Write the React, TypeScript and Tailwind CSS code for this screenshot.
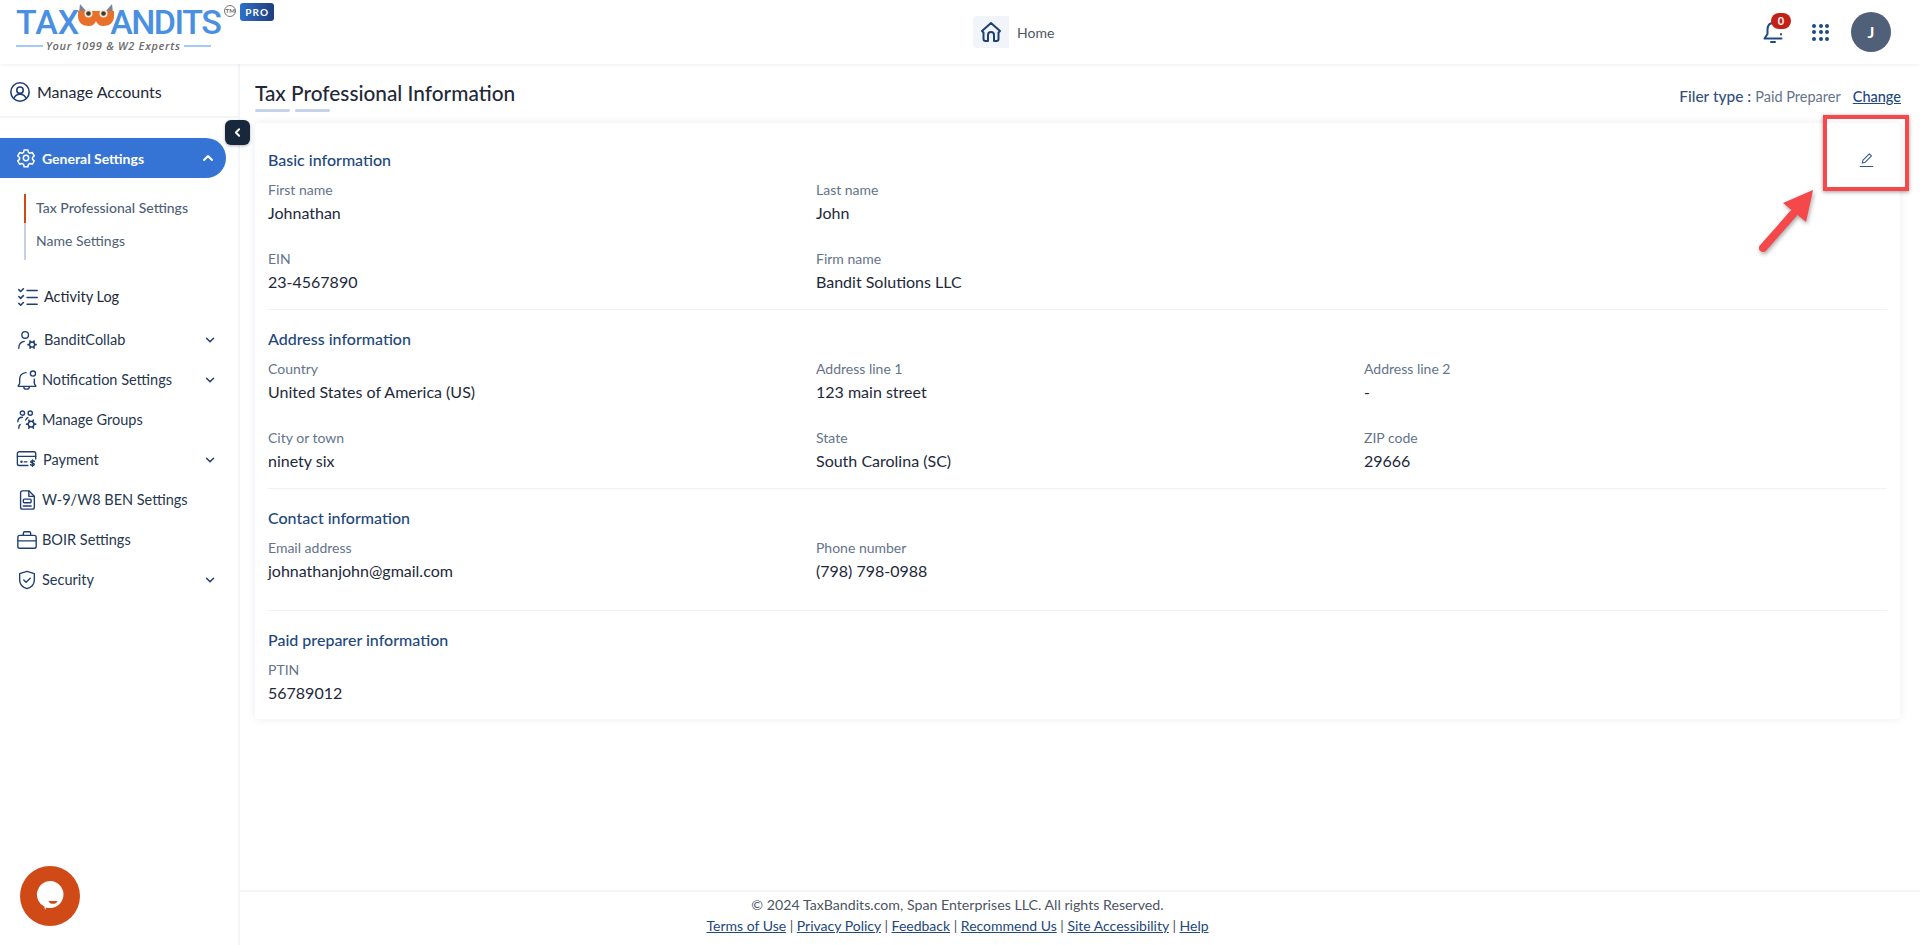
import { ChevronDown, ChevronLeft, ChevronUp } from 'lucide-react';
import type { ReactNode } from 'react';

const iconCls = 'w-[22px] h-[22px] shrink-0';

function Ic({ children }: { children: ReactNode }) {
  return (
    <svg viewBox="0 0 24 24" fill="none" stroke="#1f3f73" strokeWidth="1.5" strokeLinecap="round" strokeLinejoin="round" className={iconCls}>
      {children}
    </svg>
  );
}

function Gear({ cx, cy, r }: { cx: number; cy: number; r: number }) {
  return (
    <>
      <circle cx={cx} cy={cy} r={r * 0.62} />
      {[0, 60, 120, 180, 240, 300].map((a) => {
        const rad = (a * Math.PI) / 180;
        return (
          <path
            key={a}
            d={`M${cx + Math.cos(rad) * r * 0.65} ${cy + Math.sin(rad) * r * 0.65}L${cx + Math.cos(rad) * r} ${cy + Math.sin(rad) * r}`}
            strokeWidth="1.8"
          />
        );
      })}
    </>
  );
}

const menuItems = [
  {
    name: 'BanditCollab', gap: 'ml-[6px]', caret: true,
    icon: <><circle cx="10" cy="6.5" r="3.6" /><path d="M3 21c0-4 2.500-7 6-7.500" /><Gear cx={17.500} cy={17} r={4.500} /></>,
  },
  {
    name: 'Notification Settings', caret: true,
    icon: <><path d="M20 15c0 1.500.5 2.500 1.500 3v1h-19v-1c1-.5 1.500-1.500 1.500-3v-4c0-4 2.500-6.500 7-7" /><path d="M8.500 19.500a3 2.500 0 0 0 6 0" /><circle cx="18.500" cy="5" r="2.800" /><path d="M20 11v4" /></>,
  },
  {
    name: 'Manage Groups',
    icon: <><circle cx="7" cy="4.500" r="2.300" /><circle cx="15.500" cy="4.500" r="2.300" /><path d="M2 14c0-3 2-5 5-5M3 21c0-2 .5-3 1.500-4M13 9.500c-1 .5-2 1.500-2.500 2.500" /><Gear cx={16.500} cy={16.500} r={5} /></>,
  },
  {
    name: 'Payment', gap: 'ml-[5px]', caret: true,
    icon: <><path d="M13 18H3.500A2 2 0 0 1 1.500 16V5a2 2 0 0 1 2-2h16a2 2 0 0 1 2 2v6" /><path d="M1.500 8h20" /><circle cx="6" cy="14" r=".6" /><path d="M9 14h3M20 13.500c-.5-1-3.500-1-4 .3-.5 1.700 4.500 1.200 4 3.200-.4 1.300-3.600 1.300-4.200 0M18 12v7" /></>,
  },
  {
    name: 'W-9/W8 BEN Settings',
    icon: <><path d="M7 2h7l6 6v12a2 2 0 0 1-2 2H7a2 2 0 0 1-2-2V4a2 2 0 0 1 2-2z" /><path d="M14 2v6h6" /><rect x="8" y="11" width="8.500" height="4" rx="1" /><path d="M8 18.500h8.500" /></>,
  },
  {
    name: 'BOIR Settings',
    icon: <><rect x="2" y="7" width="20" height="14" rx="2" /><path d="M8 7V4.500A1.500 1.500 0 0 1 9.500 3h5A1.500 1.500 0 0 1 16 4.500V7M2 13h20" /></>,
  },
  {
    name: 'Security', caret: true,
    icon: <><path d="M12 2.500 20 5v7c0 5-3.500 8-8 9.500-4.500-1.500-8-4.500-8-9.500V5z" /><path d="m8.500 12 2.500 2.500 4.500-4.500" /></>,
  },
];

function Field({ label, value }: { label: string; value: string }) {
  return (
    <div>
      <p className="text-[14px] leading-[20px] text-[#64748b]">{label}</p>
      <p className="mt-[2px] text-[16px] leading-[22px] text-[#1e293b]">{value}</p>
    </div>
  );
}

function SectionTitle({ children }: { children: ReactNode }) {
  return <h3 className="text-[16px] leading-[22px] font-medium text-[#22477c]">{children}</h3>;
}

export default function App() {
  return (
    <div className="relative h-[945px] overflow-hidden bg-white font-['Lato','Inter',sans-serif]">
      {/* header */}
      <header className="relative z-10 h-[64px] bg-white flex items-center shadow-[0_1px_4px_rgba(30,60,110,0.08)]">
        <div className="w-[300px] pl-[16px] pt-[5px] self-start">
          <div className="flex items-start">
            <div>
              <div className="flex items-center h-[35px] font-['Roboto',sans-serif] text-[34px] leading-[35px] font-medium text-[#4a90e2]">
                <span>TAX</span>
                <svg viewBox="0 0 36 24" className="w-[36px] h-[24px] -mt-[13px] -mx-[1px] shrink-0">
                  <path d="M1 9 2 0l7 8zM35 9 34 0l-7 8z" fill="#7d8590" />
                  <path d="M0 7h36v5c0 7-5 10-11 10-3 0-6-2-7-5-1 3-4 5-7 5C5 22 0 19 0 12z" fill="#e8702a" />
                  <circle cx="10.500" cy="9.500" r="4" fill="#f5e9dc" />
                  <circle cx="25.500" cy="9.500" r="4" fill="#f5e9dc" />
                  <circle cx="10.500" cy="9.500" r="2.300" fill="#3b3b3b" />
                  <circle cx="25.500" cy="9.500" r="2.300" fill="#3b3b3b" />
                </svg>
                <span className="tracking-[-1.500px] -ml-[3px]">ANDITS</span>
              </div>
              <div className="flex items-center gap-[3px]">
                <span className="w-[27px] h-[2px] bg-[#a3c9f5]" />
                <span className="font-['Open_Sans',sans-serif] italic font-semibold text-[11px] leading-[12px] tracking-[0.7px] text-[#6b6b6b]">Your 1099 &amp; W2 Experts</span>
                <span className="w-[27px] h-[2px] bg-[#a3c9f5]" />
              </div>
            </div>
            <span className="ml-[4px] w-[12px] h-[12px] rounded-full border border-[#777] text-[6px] leading-[10px] text-center font-bold text-[#666]">TM</span>
            <span className="-mt-[2px] ml-[4px] w-[34px] h-[18px] rounded-[3px] bg-gradient-to-r from-[#2f6fc9] to-[#1e3f7d] text-white text-[10px] leading-[18px] font-bold tracking-[1.2px] text-center">PRO</span>
          </div>
        </div>
        <div className="ml-[673px] flex items-center">
          <div className="w-[36px] h-[32px] rounded-l-[4px] bg-[#f1f5fa] flex items-center justify-center">
            <svg viewBox="0 0 24 24" fill="none" strokeWidth="2" strokeLinejoin="round" strokeLinecap="round" className="w-[24px] h-[24px]" stroke="#1f3f73">
              <path d="M3 11 12 3l9 8-1.500 1.500V19a2 2 0 0 1-2 2H15v-6a3 3 0 0 0-6 0v6H6.500a2 2 0 0 1-2-2v-6.500z" />
            </svg>
          </div>
          <span className="ml-[8px] text-[14px] text-[#4b5563]">Home</span>
        </div>
        <div className="ml-auto flex items-center pr-[29px]">
          <div className="relative mr-[28px] w-[21px] h-[22px]">
            <svg viewBox="0 0 21 22" fill="none" stroke="#1f4a8a" strokeWidth="2" strokeLinecap="round" strokeLinejoin="round" className="w-[21px] h-[22px]">
              <path d="M10 2C6 2 4.500 5 4.500 9v4L1.500 17.500h17" />
              <path d="M8 21h4" />
              <path d="M18 13v.5" />
            </svg>
            <span className="absolute -top-[8px] left-[8px] w-[20px] h-[16px] rounded-full bg-[#c42116] text-white text-[11px] leading-[16px] font-bold text-center">0</span>
          </div>
          <div className="grid grid-cols-3 gap-[2.500px] mr-[22px]">
            {Array.from({ length: 9 }).map((_, i) => (
              <span key={i} className="w-[4px] h-[4px] rounded-full bg-[#1f4a8a]" />
            ))}
          </div>
          <div className="w-[40px] h-[40px] rounded-full bg-[#506078] text-white text-[16px] font-bold flex items-center justify-center">J</div>
        </div>
      </header>

      <div className="flex h-[881px]">
        {/* sidebar */}
        <aside className="relative w-[240px] shrink-0 border-r-2 border-[#f3f5f9]">
          <div className="h-[54px] pt-[4px] pl-[9px] flex items-center gap-[6px] border-b-2 border-[#f3f5f9] text-[16px] text-[#1e293b]">
            <svg viewBox="0 0 24 24" fill="none" stroke="#1f3f73" strokeWidth="1.700" className="w-[22px] h-[22px]">
              <circle cx="12" cy="12" r="10" />
              <circle cx="12" cy="10" r="3.500" />
              <path d="M5.500 19c1-3.500 3.500-4.500 6.500-4.500s5.500 1 6.500 4.500" />
            </svg>
            Manage Accounts
          </div>
          <button className="absolute top-[56px] -right-[12px] z-10 w-[25px] h-[25px] rounded-[6px] bg-[#17283c] text-white flex items-center justify-center shadow-[0_1px_3px_rgba(0,0,0,0.3)]">
            <ChevronLeft size={13} strokeWidth={3.500} />
          </button>

          <div className="mt-[20px] mr-[12px] h-[40px] rounded-r-[20px] bg-[#3574d4] text-white flex items-center pl-[16px] pr-[10px] text-[14px] font-bold">
            <svg viewBox="0 0 24 24" fill="none" stroke="currentColor" strokeWidth="1.800" strokeLinejoin="round" className="w-[20px] h-[20px] mr-[6px]">
              <circle cx="12" cy="12" r="3.200" />
              <path d="M9.700 2.500h4.600l.6 2.800 2 1.100 2.700-.9 2.300 4-2.100 1.900v2.200l2.100 1.900-2.300 4-2.700-.9-2 1.100-.6 2.800H9.700l-.6-2.800-2-1.100-2.700.9-2.300-4 2.100-1.900v-2.200L2.100 9.500l2.300-4 2.700.9 2-1.100z" />
            </svg>
            General Settings
            <ChevronUp size={16} strokeWidth={3} className="ml-auto" />
          </div>

          <div className="mt-[16px] ml-[24px] w-[150px] flex">
            <div className="w-[2px] shrink-0 flex flex-col">
              <span className="h-[29px] bg-[#d2480f]" />
              <span className="h-[37px] bg-[#c5d1e3]" />
            </div>
            <div className="pl-[10px] text-[14px] text-[#505f78] whitespace-nowrap">
              <p className="h-[33px] leading-[28px] font-medium">Tax Professional Settings</p>
              <p className="h-[33px] leading-[28px]">Name Settings</p>
            </div>
          </div>

          <div className="mt-[17px] h-[40px] flex items-center pl-[17px] text-[14.500px] text-[#1e293b]">
            <svg viewBox="0 0 24 24" fill="none" stroke="#1f3f73" strokeWidth="1.700" strokeLinecap="round" strokeLinejoin="round" className={iconCls}>
              <path d="m2 4 2 2 3-3M2 11.500l2 2 3-3M2 19l2 2 3-3M11 5h11M11 12.500h11M11 20h11" />
            </svg>
            <span className="ml-[5px]">Activity Log</span>
          </div>

          <nav className="mt-[3px]">
            {menuItems.map((item) => (
              <div key={item.name} className="h-[40px] flex items-center pl-[16px] pr-[21px] text-[14.500px] text-[#26374f]">
                <Ic>{item.icon}</Ic>
                <span className={item.gap ?? 'ml-[4px]'}>{item.name}</span>
                {item.caret && <ChevronDown size={14} strokeWidth={2.500} className="ml-auto text-[#1f3f73]" />}
              </div>
            ))}
          </nav>

          <div className="absolute left-[20px] top-[802px] w-[60px] h-[60px] rounded-full bg-[#cf4a16] flex items-center justify-center">
            <svg viewBox="0 0 28 30" className="w-[28px] h-[30px] -mt-[2px]">
              <path d="M14 1a13.500 13.500 0 1 1-4 26.400L9.200 30l-1-3.500A13.500 13.500 0 0 1 14 1z" fill="#fff" />
              <path d="M12.500 21h9c-.7 2-2.500 2.800-4.500 2.800s-3.800-.8-4.500-2.800z" fill="#cf4a16" />
            </svg>
          </div>
        </aside>

        {/* main */}
        <main className="flex-1 min-w-0 flex flex-col">
          <div className="flex-1 pl-[15px] pr-[20px]">
            <div className="h-[59px] flex items-start justify-between">
              <div className="pt-[15px]">
                <h1 className="text-[20.800px] leading-[28px] font-medium text-[#1f2937]">Tax Professional Information</h1>
                <div className="flex gap-[5px] mt-[2px]">
                  <span className="w-[35px] h-[3px] rounded-full bg-[#c5d3e8]" />
                  <span className="w-[35px] h-[3px] rounded-full bg-[#c5d3e8]" />
                </div>
              </div>
              <div className="pt-[21px] -mr-[1px] flex items-center text-[14.500px] text-[#64748b]">
                <span className="text-[15.500px] font-medium text-[#33507c] mr-[4px]">Filer type :</span>
                Paid Preparer
                <a className="ml-[12px] text-[#22477c] underline font-medium">Change</a>
              </div>
            </div>

            <section className="h-[596px] rounded-[4px] bg-white px-[13px] pt-[26px] shadow-[0_0_8px_rgba(40,70,120,0.1)]">
              <SectionTitle>Basic information</SectionTitle>
              <div className="mt-[9px] grid grid-cols-[548px_548px_1fr] gap-y-[25px]">
                <Field label="First name" value="Johnathan" />
                <Field label="Last name" value="John" />
                <span />
                <Field label="EIN" value="23-4567890" />
                <Field label="Firm name" value="Bandit Solutions LLC" />
              </div>

              <hr className="mt-[16px] border-[#eef1f5]" />
              <div className="mt-[18px]"><SectionTitle>Address information</SectionTitle></div>
              <div className="mt-[9px] grid grid-cols-[548px_548px_1fr] gap-y-[25px]">
                <Field label="Country" value="United States of America (US)" />
                <Field label="Address line 1" value="123 main street" />
                <Field label="Address line 2" value="-" />
                <Field label="City or town" value="ninety six" />
                <Field label="State" value="South Carolina (SC)" />
                <Field label="ZIP code" value="29666" />
              </div>

              <hr className="mt-[16px] border-[#eef1f5]" />
              <div className="mt-[18px]"><SectionTitle>Contact information</SectionTitle></div>
              <div className="mt-[9px] grid grid-cols-[548px_548px_1fr]">
                <Field label="Email address" value="johnathanjohn@gmail.com" />
                <Field label="Phone number" value="(798) 798-0988" />
              </div>

              <hr className="mt-[28px] border-[#eef1f5]" />
              <div className="mt-[18px]"><SectionTitle>Paid preparer information</SectionTitle></div>
              <div className="mt-[9px]">
                <Field label="PTIN" value="56789012" />
              </div>
            </section>
          </div>

          <footer className="h-[55px] border-t-2 border-[#f3f5f9] pt-[2px] pr-[245px] text-center text-[14.200px] leading-[21px] text-[#4b5563]">
            <p>© 2024 TaxBandits.com, Span Enterprises LLC. All rights Reserved.</p>
            <p className="text-[14px]">
              <a className="text-[#22477c] underline">Terms of Use</a> | <a className="text-[#22477c] underline">Privacy Policy</a> | <a className="text-[#22477c] underline">Feedback</a> | <a className="text-[#22477c] underline">Recommend Us</a> | <a className="text-[#22477c] underline">Site Accessibility</a> | <a className="text-[#22477c] underline">Help</a>
            </p>
          </footer>
        </main>
      </div>

      {/* annotation over the edit button */}
      <svg viewBox="0 0 24 24" fill="none" stroke="#2f5a94" strokeWidth="1.500" strokeLinecap="round" strokeLinejoin="round" className="absolute left-[1858px] top-[151px] w-[17px] h-[17px]">
        <path d="M6 17 7 13 16 4l3 3-9 9z" />
        <path d="M3 22h18" />
      </svg>
      <div className="absolute left-[1823px] top-[115px] w-[86px] h-[76px] border-[4px] border-[#f4484b] shadow-[0_1px_4px_rgba(0,0,0,0.4)]" />
      <svg viewBox="0 0 60 70" className="absolute left-[1757px] top-[188px] w-[60px] h-[70px] drop-shadow-[1px_2px_2px_rgba(0,0,0,0.35)]">
        <path d="M6 60 36 26" stroke="#f4484b" strokeWidth="8" strokeLinecap="round" />
        <path d="M56 2 26 15l23 19z" fill="#f4484b" />
      </svg>
    </div>
  );
}
